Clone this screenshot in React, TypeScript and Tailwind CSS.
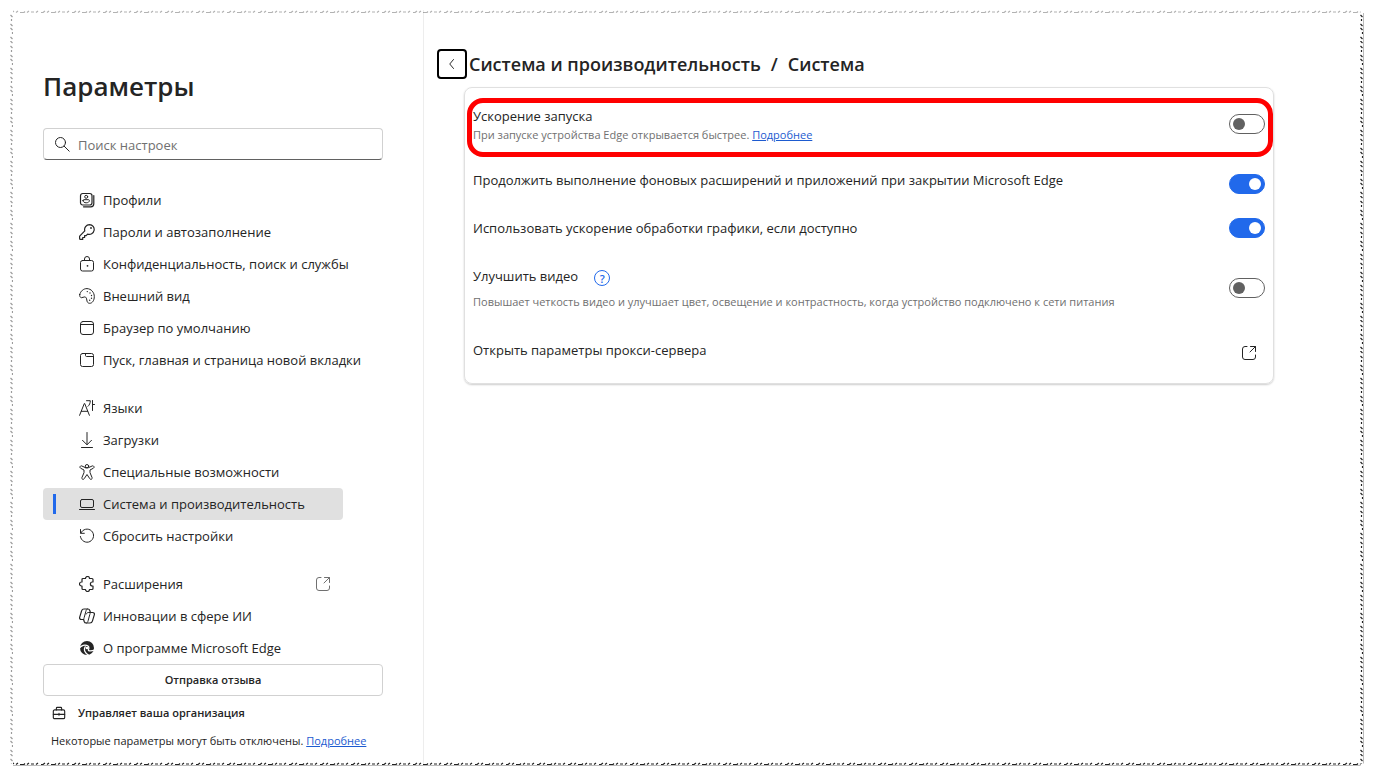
import { useState } from 'react';
import type { ReactNode } from 'react';

function Icon({ children, className = 'size-4' }: { children: ReactNode; className?: string }) {
    return (
        <svg viewBox="0 0 16 16" fill="none" stroke="currentColor" strokeWidth="1" strokeLinecap="round" strokeLinejoin="round" className={`shrink-0 ${className}`} aria-hidden="true">
            {children}
        </svg>
    );
}

const icons = {
    profiles: (
        <Icon>
            <rect x="1.5" y="1.5" width="11.5" height="11.5" rx="2.2" strokeWidth="1.2" />
            <circle cx="7.2" cy="4.8" r="1.5" />
            <path d="M4 8.5c0-.5.4-.8.8-.8h4.8c.4 0 .8.3.8.8 0 1.5-1.4 2.3-3.2 2.3S4 10 4 8.5z" />
            <path d="M14.8 3.5v8.3a3 3 0 0 1-3 3H4.5" strokeWidth="1.2" />
        </Icon>
    ),
    key: (
        <Icon>
            <path d="M10.5.6a4.9 4.9 0 0 0-4.7 6.3L.9 11.8a1 1 0 0 0-.3.7v2c0 .5.4.9.9.9h2.2v-1.9h1.9v-1.9h1.5l1.5-1.5A4.9 4.9 0 1 0 10.5.6z" strokeWidth="1.2" />
            <circle cx="12" cy="4" r=".9" fill="currentColor" stroke="none" />
        </Icon>
    ),
    lock: (
        <Icon>
            <rect x="1.5" y="4.5" width="13" height="10.5" rx="2" />
            <path d="M5.500 4.500V3a2.500 2.500 0 0 1 5 0v1.500" />
            <circle cx="8.5" cy="9.8" r=".9" fill="currentColor" stroke="none" />
        </Icon>
    ),
    palette: (
        <Icon>
            <path d="M.7 6.600C1.600 3 4.600.5 8 .6c4.300.2 7.300 3.900 7.300 8 0 3.700-1.900 6.700-4.600 6.700-2 0-2.700-1.500-2.900-3.300-.2-1.700-.7-3-2-3.100-1.500-.1-2.100.9-3.300.8C1.100 9.600.4 8 .7 6.600z" />
            <g fill="currentColor" stroke="none">
                <circle cx="8.3" cy="3.6" r=".7" />
                <circle cx="11" cy="5" r=".7" />
                <circle cx="12.5" cy="7.5" r=".7" />
                <circle cx="12.5" cy="10.3" r=".7" />
                <circle cx="10.7" cy="12.3" r=".7" />
            </g>
        </Icon>
    ),
    browser: (
        <Icon>
            <rect x="1.5" y="1.5" width="13" height="13" rx="2.5" />
            <path d="M1.500 4.500h13" />
        </Icon>
    ),
    tab: (
        <Icon>
            <rect x="1.5" y="1.5" width="13" height="13" rx="2" />
            <path d="M6.500 1.500v2c0 .6.400 1 1 1h7" />
        </Icon>
    ),
    languages: (
        <Icon>
            <path d="M.6 15.300 5.300 3.500h.4l4.700 11.800M2.300 11.300h6.400" />
            <path d="M7.500.7h3.800c0 2.500-.8 4.300-2.300 5.600M13.500.5v10M13.500 4.500h2" />
        </Icon>
    ),
    download: (
        <Icon>
            <path d="M8 .5v12M3.500 8.300 8 12.800l4.500-4.500M2.500 15.500h11" />
        </Icon>
    ),
    accessibility: (
        <Icon>
            <circle cx="8" cy="2.2" r="1.7" />
            <path d="M6.300 3.600 2.700 1.900C1.200 1.400.2 3.500 1.600 4.200L5 6v2.600l-2.100 5.100c-.5 1.500 1.600 2.300 2.300 1L8 10.500l2.800 4.200c.7 1.300 2.800.5 2.300-1L11 8.600V6l3.400-1.800c1.400-.7.4-2.800-1.100-2.300L9.700 3.600a4.500 4.500 0 0 1-3.400 0z" />
        </Icon>
    ),
    laptop: (
        <Icon>
            <rect x="1.5" y="3.5" width="13" height="8" rx="1.5" />
            <path d="M.5 13.500h15" />
        </Icon>
    ),
    reset: (
        <Icon>
            <path d="M1.500 1.500v3.800h3.800M1.900 5A6.600 6.600 0 1 1 1.400 8.500" />
        </Icon>
    ),
    puzzle: (
        <Icon>
            <path d="M6.500 2.500a2 2 0 0 1 4 0H13c.6 0 1 .4 1 1V6h-.6a2 2 0 0 0 0 4h.6v2.500c0 .6-.4 1-1 1h-2.500a2 2 0 0 1-4 0H4c-.6 0-1-.4-1-1V10h-.5a2 2 0 0 1 0-4H3V3.500c0-.6.4-1 1-1z" strokeWidth="1.2" />
        </Icon>
    ),
    copilot: (
        <Icon>
            <path d="M5 1h4c1 0 1.500.6 1.800 1.500l.6 2M6 4.500h7.600c1.400 0 2.100 1.100 1.700 2.400l-1.900 6.300c-.3 1.100-1.200 1.800-2.400 1.800H7c-1 0-1.500-.6-1.800-1.500l-.6-2M10 11.500H2.400C1 11.500.3 10.400.7 9.100l1.900-6.300C2.900 1.700 3.800 1 5 1" stroke="none" />
            <path d="M4.600 11.500H2.400C1 11.500.3 10.400.7 9.100l1.900-6.300C2.900 1.700 3.800 1 5 1h4c1 0 1.500.6 1.800 1.500l.6 2h2.200c1.400 0 2.100 1.100 1.700 2.400l-1.900 6.300c-.3 1.100-1.200 1.800-2.400 1.800H7c-1 0-1.500-.6-1.800-1.500z" strokeWidth="1.2" />
            <path d="M8.300 1C7.500 1.400 7.200 2.200 6.900 3.200L5.200 9.500c-.3 1.200-.6 2-.6 2M7.700 15c.8-.4 1.100-1.200 1.400-2.200l1.700-6.300c.3-1.200.6-2 .6-2H9.200c-.9 0-1.500.6-1.800 1.500" />
        </Icon>
    ),
    edge: (
        <Icon>
            <circle cx="8" cy="8" r="7" fill="currentColor" stroke="none" />
            <path d="M0 8.800C1.800 5 6.500 4.100 9 6.100c1.700 1.500.6 2.900.4 3.700-.2 1.300 2.600 1.800 6.600 0" stroke="#fff" strokeWidth="1.300" />
            <path d="M6.200 6.800C4.400 9.800 6 13.500 10 15.500" stroke="#fff" strokeWidth="1.300" />
            <circle cx="8" cy="8" r="1.3" fill="#fff" stroke="none" />
        </Icon>
    ),
    briefcase: (
        <Icon className="size-[14px]">
            <rect x="1.5" y="4.5" width="13" height="10" rx="1.5" strokeWidth="1.3" />
            <path d="M5 4.500v-2c0-.6.400-1 1-1h4c.6 0 1 .4 1 1v2M1.500 9.500h13M8 8.500v2" strokeWidth="1.3" />
        </Icon>
    ),
    external: (
        <Icon>
            <path d="M6 1.500H4A2.500 2.500 0 0 0 1.500 4v8A2.500 2.500 0 0 0 4 14.500h8a2.500 2.500 0 0 0 2.500-2.500v-2M9.500 1.500h5v5M14.500 1.500 9 7" />
        </Icon>
    ),
};

const navGroups = [
    [
        { icon: icons.profiles, label: 'Профили' },
        { icon: icons.key, label: 'Пароли и автозаполнение' },
        { icon: icons.lock, label: 'Конфиденциальность, поиск и службы' },
        { icon: icons.palette, label: 'Внешний вид' },
        { icon: icons.browser, label: 'Браузер по умолчанию' },
        { icon: icons.tab, label: 'Пуск, главная и страница новой вкладки' },
    ],
    [
        { icon: icons.languages, label: 'Языки' },
        { icon: icons.download, label: 'Загрузки' },
        { icon: icons.accessibility, label: 'Специальные возможности' },
        { icon: icons.laptop, label: 'Система и производительность', active: true },
        { icon: icons.reset, label: 'Сбросить настройки' },
    ],
    [
        { icon: icons.puzzle, label: 'Расширения', external: true },
        { icon: icons.copilot, label: 'Инновации в сфере ИИ' },
        { icon: icons.edge, label: 'О программе Microsoft Edge' },
    ],
];

function NavItem({ icon, label, active, external }: { icon: ReactNode; label: string; active?: boolean; external?: boolean }) {
    return (
        <li>
            <a href="#" aria-current={active ? 'page' : undefined} className={`relative flex h-8 w-[300px] items-center gap-2 rounded pr-3 pl-9 whitespace-nowrap ${active ? 'bg-[#e0e0e0]' : ''}`}>
                {active && <span className="absolute left-[10px] h-5 w-[3px] bg-[#2169eb]" />}
                {icon}
                {label}
                {external && <span className="ml-auto text-[#707070]">{icons.external}</span>}
            </a>
        </li>
    );
}

function Toggle({ id, defaultOn = false }: { id: string; defaultOn?: boolean }) {
    const [on, setOn] = useState(defaultOn);
    return (
        <input
            id={id}
            type="checkbox"
            role="switch"
            checked={on}
            onChange={() => setOn(!on)}
            className="flex h-5 w-9 shrink-0 appearance-none items-center rounded-full border border-[#616161] px-[3px] before:size-3 before:rounded-full before:bg-[#616161] checked:justify-end checked:border-[#2169eb] checked:bg-[#2169eb] checked:before:bg-white"
        />
    );
}

// Ragged outline of the page, one strip of ticks per side
function TornEdges() {
    return (
        <svg className="pointer-events-none absolute inset-0 size-full overflow-visible" aria-hidden="true">
            <defs>
                <pattern id="edge-x" width="31" height="3" patternUnits="userSpaceOnUse">
                    <path d="M0 2.500h2l2-1.500M6 2.500l2-1.500M10 2.500h4l1-1M17 2.500l2-1.500M21 2h3M26 2.500l2-1.500" stroke="#222" strokeWidth="1.2" fill="none" />
                </pattern>
                <pattern id="edge-y" width="3" height="31" patternUnits="userSpaceOnUse">
                    <path d="M.5 0 2.500 2M.5 5l2 2M1.500 9v2M.5 14l2 2M.5 18l2 2M2.500 22v2M.5 27l2 2" stroke="#222" strokeWidth="1.2" fill="none" />
                </pattern>
            </defs>
            <rect x="3" width="99.6%" height="3" fill="url(#edge-x)" opacity=".35" />
            <rect y="3" width="3" height="99.4%" fill="url(#edge-y)" opacity=".45" />
            <rect x="100%" y="3" width="1" height="99.4%" fill="#bbb" />
            <rect x="3" y="100%" width="99.6%" height="1" fill="#bbb" />
            <svg x="100%" className="overflow-visible">
                <rect x="-3" y="3" width="3" height="99.4%" fill="url(#edge-y)" />
            </svg>
            <svg y="100%" className="overflow-visible">
                <rect x="3" y="-3" width="99.6%" height="3" fill="url(#edge-x)" />
            </svg>
        </svg>
    );
}

function Sidebar() {
    return (
        <aside className="w-[414px] shrink-0 border-r border-[#ededed] pr-10 pl-[33px]">
            <h1 className="pt-14 text-[26px] leading-10 font-semibold">Параметры</h1>
            <label className="mt-[22px] flex h-8 items-center gap-2 rounded border border-[#d1d1d1] border-b-[#616161] px-[10px]">
                <Icon>
                    <circle cx="6.5" cy="6.5" r="5" />
                    <path d="m10.200 10.200 5 5" />
                </Icon>
                <input type="search" aria-label="Поиск настроек" placeholder="Поиск настроек" className="min-w-0 flex-1 pt-px outline-none placeholder:text-[#707070]" />
            </label>
            <nav className="mt-6 flex flex-col gap-4" aria-label="Параметры">
                {navGroups.map((group, index) => (
                    <ul key={index}>
                        {group.map((item) => (
                            <NavItem key={item.label} {...item} />
                        ))}
                    </ul>
                ))}
            </nav>
            <button type="button" className="h-8 w-full rounded border border-[#d1d1d1] text-[11px] leading-4 font-semibold">Отправка отзыва</button>
            <div className="mt-[9px] flex items-center gap-3 pl-[9px] text-[11px] leading-4 font-semibold">
                {icons.briefcase}
                Управляет ваша организация
            </div>
            <p className="mt-3 pl-2 text-[11px] leading-4 whitespace-nowrap">
                Некоторые параметры могут быть отключены. <a href="#" className="text-[#1d5bd0] underline">Подробнее</a>
            </p>
        </aside>
    );
}

function SystemCard() {
    return (
        <section className="max-w-[810px] rounded-lg border border-[#e0e0e0] px-2 pt-[10px] shadow-[0_1px_2px_rgba(0,0,0,0.2)]">
            <div className="relative flex h-[59px] justify-between pt-2">
                <div>
                    <label htmlFor="boost" className="block">Ускорение запуска</label>
                    <p className="text-[11px] leading-[18px] text-[#707070]">
                        При запуске устройства Edge открывается быстрее. <a href="#" className="text-[#1d5bd0] underline">Подробнее</a>
                    </p>
                </div>
                <div className="pt-2">
                    <Toggle id="boost" />
                </div>
                <div className="pointer-events-none absolute inset-y-0 -right-2 -left-[6px] rounded-2xl border-5 border-[#ff0000]" />
            </div>
            <div className="flex justify-between pt-[13px]">
                <label htmlFor="background">Продолжить выполнение фоновых расширений и приложений при закрытии Microsoft Edge</label>
                <div className="pt-1">
                    <Toggle id="background" defaultOn />
                </div>
            </div>
            <div className="flex justify-between pt-6">
                <label htmlFor="graphics">Использовать ускорение обработки графики, если доступно</label>
                <Toggle id="graphics" defaultOn />
            </div>
            <div className="flex justify-between pt-7">
                <div>
                    <div className="flex gap-4">
                        <label htmlFor="video">Улучшить видео</label>
                        <button type="button" aria-label="Справка" className="mt-1 flex size-4 items-center justify-center rounded-full border border-[#2169eb] text-[11px] leading-none font-semibold text-[#2169eb]">?</button>
                    </div>
                    <p className="mt-2 text-[11px] leading-4 text-[#707070]">Повышает четкость видео и улучшает цвет, освещение и контрастность, когда устройство подключено к сети питания</p>
                </div>
                <div className="pt-3">
                    <Toggle id="video" />
                </div>
            </div>
            <a href="#" className="flex justify-between pt-[30px] pr-2 pb-[22px]">
                Открыть параметры прокси-сервера
                <span className="pt-[5px]">{icons.external}</span>
            </a>
        </section>
    );
}

export default function App() {
    return (
        <div className="flex min-h-screen bg-white p-[10px] font-['Open_Sans','Noto_Sans',sans-serif] text-[13px] leading-5 text-[#242424]">
            <div className="relative flex min-w-0 flex-1">
                <Sidebar />
                <main className="min-w-0 flex-1 pt-[39px]">
                    <header className="mb-2 flex items-center gap-[2px] px-[13px]">
                        <button type="button" aria-label="Назад" className="flex size-[30px] items-center justify-center rounded border-2 border-black">
                            <Icon className="size-3">
                                <path d="M10 2 5 8l5 6" strokeWidth="1.3" />
                            </Icon>
                        </button>
                        <h2 className="flex gap-[10px] text-lg font-semibold whitespace-nowrap">
                            <span>Система и производительность</span>
                            <span>/</span>
                            <span>Система</span>
                        </h2>
                    </header>
                    <div className="px-10">
                        <SystemCard />
                    </div>
                </main>
                <TornEdges />
            </div>
        </div>
    );
}
